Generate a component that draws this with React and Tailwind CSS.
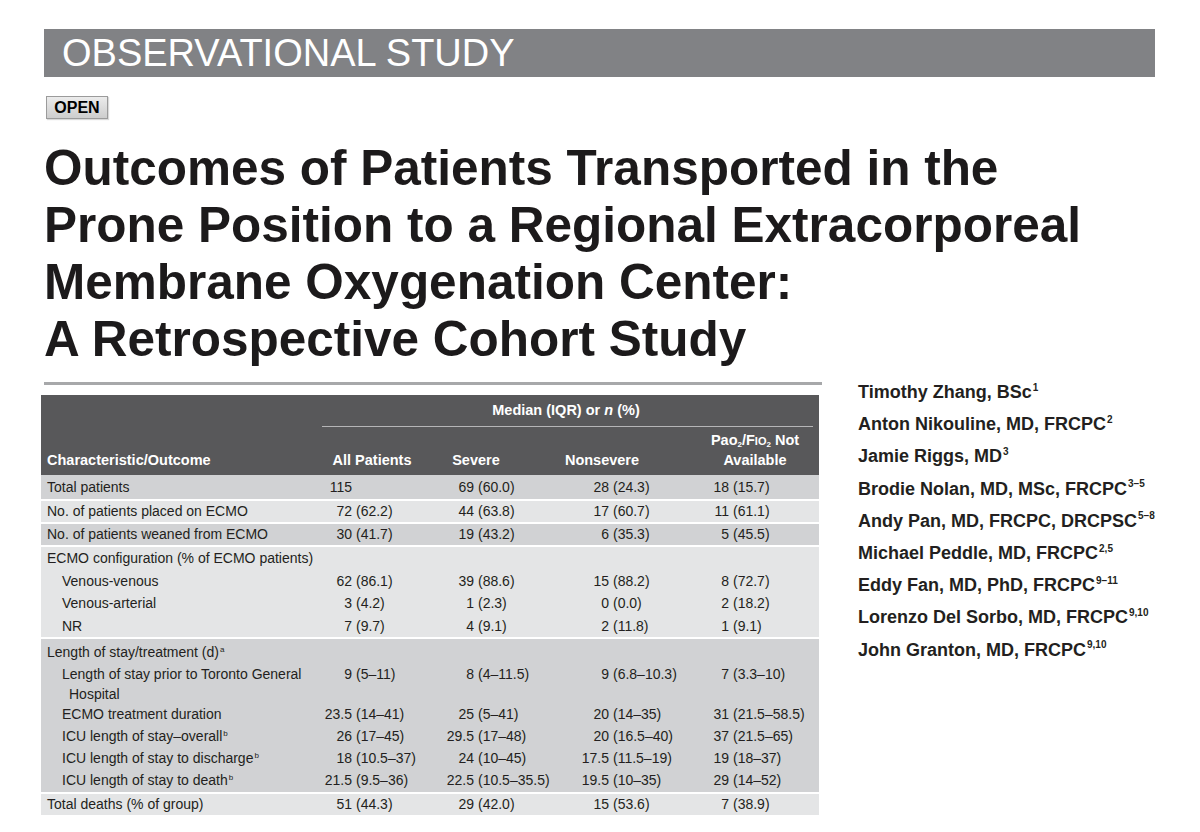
import React from "react";

const COLS = "grid grid-cols-[281px_100px_108px_144px_145px]";
const BOXES = ["w-[30px]", "w-[52px]", "w-[79px]", "w-[55px]"];

const sections = [
  {
    tone: "dark",
    lines: [{ label: "Total patients", vals: [["115", ""], ["69", "(60.0)"], ["28", "(24.3)"], ["18", "(15.7)"]] }],
  },
  {
    tone: "light",
    lines: [{ label: "No. of patients placed on ECMO", vals: [["72", "(62.2)"], ["44", "(63.8)"], ["17", "(60.7)"], ["11", "(61.1)"]] }],
  },
  {
    tone: "dark",
    lines: [{ label: "No. of patients weaned from ECMO", vals: [["30", "(41.7)"], ["19", "(43.2)"], ["6", "(35.3)"], ["5", "(45.5)"]] }],
  },
  {
    tone: "light",
    lines: [
      { label: "ECMO configuration (% of ECMO patients)" },
      { label: "Venous-venous", indent: true, vals: [["62", "(86.1)"], ["39", "(88.6)"], ["15", "(88.2)"], ["8", "(72.7)"]] },
      { label: "Venous-arterial", indent: true, vals: [["3", "(4.2)"], ["1", "(2.3)"], ["0", "(0.0)"], ["2", "(18.2)"]] },
      { label: "NR", indent: true, vals: [["7", "(9.7)"], ["4", "(9.1)"], ["2", "(11.8)"], ["1", "(9.1)"]] },
    ],
  },
  {
    tone: "dark",
    pad: true,
    lines: [
      { label: "Length of stay/treatment (d)", sup: "a" },
      {
        label: "Length of stay prior to Toronto General",
        wrap: "Hospital",
        indent: true,
        vals: [["9", "(5–11)"], ["8", "(4–11.5)"], ["9", "(6.8–10.3)"], ["7", "(3.3–10)"]],
      },
      { label: "ECMO treatment duration", indent: true, vals: [["23.5", "(14–41)"], ["25", "(5–41)"], ["20", "(14–35)"], ["31", "(21.5–58.5)"]] },
      { label: "ICU length of stay–overall", sup: "b", indent: true, vals: [["26", "(17–45)"], ["29.5", "(17–48)"], ["20", "(16.5–40)"], ["37", "(21.5–65)"]] },
      { label: "ICU length of stay to discharge", sup: "b", indent: true, vals: [["18", "(10.5–37)"], ["24", "(10–45)"], ["17.5", "(11.5–19)"], ["19", "(18–37)"]] },
      { label: "ICU length of stay to death", sup: "b", indent: true, vals: [["21.5", "(9.5–36)"], ["22.5", "(10.5–35.5)"], ["19.5", "(10–35)"], ["29", "(14–52)"]] },
    ],
  },
  {
    tone: "light",
    lines: [{ label: "Total deaths (% of group)", vals: [["51", "(44.3)"], ["29", "(42.0)"], ["15", "(53.6)"], ["7", "(38.9)"]] }],
  },
];

const authors = [
  ["Timothy Zhang, BSc", "1"],
  ["Anton Nikouline, MD, FRCPC", "2"],
  ["Jamie Riggs, MD", "3"],
  ["Brodie Nolan, MD, MSc, FRCPC", "3–5"],
  ["Andy Pan, MD, FRCPC, DRCPSC", "5–8"],
  ["Michael Peddle, MD, FRCPC", "2,5"],
  ["Eddy Fan, MD, PhD, FRCPC", "9–11"],
  ["Lorenzo Del Sorbo, MD, FRCPC", "9,10"],
  ["John Granton, MD, FRCPC", "9,10"],
];

function Value({ v, i }) {
  return (
    <div className="flex whitespace-nowrap">
      <span className={`${BOXES[i]} shrink-0 text-right`}>{v[0]}</span>
      {v[1] && <span className="ml-[4px]">{v[1]}</span>}
    </div>
  );
}

function Line({ line, lh }) {
  return (
    <div className={`${COLS} ${lh}`}>
      <div className={`whitespace-nowrap ${line.indent ? "pl-[21px]" : "pl-[6px]"}`}>
        {line.label}
        {line.sup && <sup className="text-[8px] top-[-0.6em] ml-[1px]">{line.sup}</sup>}
        {line.wrap && <div className="pl-[7px] leading-[18px]">{line.wrap}</div>}
      </div>
      {line.vals && line.vals.map((v, i) => <Value key={i} v={v} i={i} />)}
    </div>
  );
}

export default function App() {
  return (
    <div className="min-h-screen bg-white font-['Liberation_Sans',Arial,sans-serif] text-[#231f20] pt-[29px] pl-[44px] pr-[45px]">
      <div className="h-[48px] bg-[#818285] flex items-center pl-[18px] text-white text-[38px] leading-none">
        OBSERVATIONAL STUDY
      </div>

      <div className="mt-[19px] ml-[2px] w-[62px] h-[23px] flex items-center justify-center border border-[#9b9b9b] bg-gradient-to-b from-[#ececec] to-[#cdcdcd] text-[16px] font-bold text-black shadow-[1px_1px_1px_rgba(0,0,0,0.15)]">
        OPEN
      </div>

      <h1 className="mt-[20px] text-[49.5px] leading-[57px] font-bold text-[#1c1a1b]">
        Outcomes of Patients Transported in the
        <br />
        Prone Position to a Regional Extracorporeal
        <br />
        Membrane Oxygenation Center:
        <br />A Retrospective Cohort Study
      </h1>

      <div className="flex">
        <div className="-ml-[3px] w-[781px]">
          <div className="mt-[15px] ml-[3px] h-[3px] bg-[#a7a8aa]" />
          <div className="mt-[10px] w-[778px] text-[14px]">
            <div className="bg-[#58585a] text-white font-bold text-[14.5px]">
              <div className={`${COLS} h-[31px] items-center`}>
                <div />
                <div className="col-span-4 text-center pr-[9px]">
                  Median (IQR) or <i>n</i> (%)
                </div>
              </div>
              <div className={COLS}>
                <div />
                <div className="col-span-4 mr-[6px] h-px bg-[#b5b5b7]" />
              </div>
              <div className={`${COLS} h-[48px] items-end pb-[5px] leading-[19px]`}>
                <div className="pl-[6px]">Characteristic/Outcome</div>
                <div className="text-center">All Patients</div>
                <div className="text-center">Severe</div>
                <div className="text-center">Nonsevere</div>
                <div className="text-center pl-[17px]">
                  Pao<sub className="text-[8px]">2</sub>/F<span className="text-[11px]">IO</span>
                  <sub className="text-[8px]">2</sub> Not
                  <br />
                  Available
                </div>
              </div>
            </div>

            {sections.map((s, i) => (
              <div
                key={i}
                className={`${s.tone === "dark" ? "bg-[#d1d2d4]" : "bg-[#e4e5e6]"} ${i > 0 ? "border-t-2 border-white" : ""} ${s.pad ? "pt-[2px] pb-[1px]" : ""}`}
              >
                {s.lines.map((l, j) => (
                  <Line key={j} line={l} lh={s.pad ? "leading-[22px]" : i === 0 ? "leading-[24px]" : i === 3 ? "leading-[22.5px]" : "leading-[21px]"} />
                ))}
              </div>
            ))}
          </div>
        </div>

        <div className="ml-[36px] pt-[9px] text-[18px] font-bold leading-[32.2px] text-[#231f20]">
          {authors.map(([name, sup]) => (
            <div key={name} className="whitespace-nowrap">
              {name}
              <sup className="text-[10px] top-[-0.75em] ml-[1px]">{sup}</sup>
            </div>
          ))}
        </div>
      </div>
    </div>
  );
}
